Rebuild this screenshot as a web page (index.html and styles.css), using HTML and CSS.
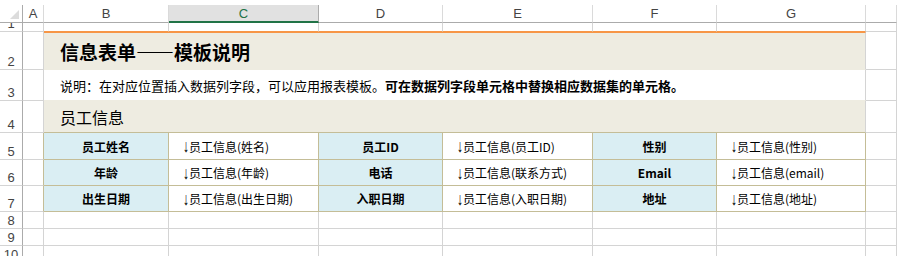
FILE: index.html
```html
<!DOCTYPE html>
<html lang="zh-CN">
<head>
<meta charset="utf-8">
<title>信息表单——模板说明</title>
<link rel="stylesheet" href="styles.css">
</head>
<body>
<div class="sheet">
  <div class="grid">
    <div class="corner"><svg width="23" height="18" viewBox="0 0 23 18"><polygon points="19,5 19,14 10,14" fill="#dcdcdc"/></svg></div>
    <div class="ch">A</div>
    <div class="ch">B</div>
    <div class="ch sel">C</div>
    <div class="ch">D</div>
    <div class="ch">E</div>
    <div class="ch">F</div>
    <div class="ch">G</div>
    <div class="ch"></div>

    <div class="rh">1</div>
    <div class="c"></div>
    <div class="c accent"></div><div class="c accent"></div><div class="c accent"></div><div class="c accent"></div><div class="c accent"></div><div class="c accent"></div>
    <div class="c"></div>

    <div class="rh">2</div>
    <div class="c"></div>
    <div class="c title">信息表单——模板说明</div>
    <div class="c"></div>

    <div class="rh">3</div>
    <div class="c"></div>
    <div class="c desc">说明：在对应位置插入数据列字段，可以应用报表模板。<b>可在数据列字段单元格中替换相应数据集的单元格。</b></div>
    <div class="c"></div>

    <div class="rh">4</div>
    <div class="c"></div>
    <div class="c section">员工信息</div>
    <div class="c"></div>

    <div class="rh">5</div>
    <div class="c edge"></div>
    <div class="c lbl">员工姓名</div>
    <div class="c val"><span class="arrow">↓</span>员工信息(姓名)</div>
    <div class="c lbl">员工ID</div>
    <div class="c val"><span class="arrow">↓</span>员工信息(员工ID)</div>
    <div class="c lbl">性别</div>
    <div class="c val"><span class="arrow">↓</span>员工信息(性别)</div>
    <div class="c"></div>

    <div class="rh">6</div>
    <div class="c edge"></div>
    <div class="c lbl">年龄</div>
    <div class="c val"><span class="arrow">↓</span>员工信息(年龄)</div>
    <div class="c lbl">电话</div>
    <div class="c val"><span class="arrow">↓</span>员工信息(联系方式)</div>
    <div class="c lbl">Email</div>
    <div class="c val"><span class="arrow">↓</span>员工信息(email)</div>
    <div class="c"></div>

    <div class="rh">7</div>
    <div class="c edge"></div>
    <div class="c lbl">出生日期</div>
    <div class="c val"><span class="arrow">↓</span>员工信息(出生日期)</div>
    <div class="c lbl">入职日期</div>
    <div class="c val"><span class="arrow">↓</span>员工信息(入职日期)</div>
    <div class="c lbl">地址</div>
    <div class="c val"><span class="arrow">↓</span>员工信息(地址)</div>
    <div class="c"></div>

    <div class="rh">8</div>
    <div class="c"></div><div class="c"></div><div class="c"></div><div class="c"></div><div class="c"></div><div class="c"></div><div class="c"></div><div class="c"></div>

    <div class="rh">9</div>
    <div class="c"></div><div class="c"></div><div class="c"></div><div class="c"></div><div class="c"></div><div class="c"></div><div class="c"></div><div class="c"></div>

    <div class="rh">10</div>
    <div class="c"></div><div class="c"></div><div class="c"></div><div class="c"></div><div class="c"></div><div class="c"></div><div class="c"></div><div class="c"></div>
  </div>
</div>
</body>
</html>
```

FILE: styles.css
```css
html, body {
  margin: 0;
  padding: 0;
  background: #ffffff;
  overflow: hidden;
}

.sheet {
  padding-top: 5px;
  width: 897px;
  height: 251px;
  overflow: hidden;
}

.grid {
  display: grid;
  grid-template-columns: 23px 21px 125px 150px 124px 150px 124px 149px 1fr;
  grid-template-rows: 18px 9px 38px 31px 32px 27px 26px 26px 17px 17px 17px;
  font-family: "Noto Sans CJK SC", sans-serif;
  color: #000;
}

.grid > div {
  box-sizing: border-box;
  overflow: hidden;
  white-space: nowrap;
}

.corner {
  border-right: 1px solid #ababab;
  border-bottom: 1px solid #ababab;
}
.corner svg { display: block; }

.ch {
  display: flex;
  align-items: center;
  justify-content: center;
  font-family: "Liberation Sans", Arial, sans-serif;
  font-size: 13px;
  color: #444;
  border-right: 1px solid #dadada;
  border-bottom: 1px solid #ababab;
}
.ch.sel {
  background: #e1e1e1;
  color: #217346;
  border-right-color: #ababab;
  border-bottom: 2px solid #217346;
}

.rh {
  display: flex;
  align-items: flex-end;
  justify-content: center;
  padding-bottom: 1px;
  font-family: "Liberation Sans", Arial, sans-serif;
  font-size: 13px;
  line-height: 13px;
  color: #444;
  border-right: 1px solid #ababab;
  border-bottom: 1px solid #d4d4d4;
}

.c {
  border-right: 1px solid #d4d4d4;
  border-bottom: 1px solid #d4d4d4;
}

.c.accent {
  border-bottom-color: #f79646;
}

.title, .desc, .section {
  grid-column: span 6;
  display: flex;
  align-items: center;
  padding-left: 16px;
}

.title {
  background: #eeece1;
  border-top: 1px solid #f79646;
  border-bottom-color: #eeece1;
  font-size: 19px;
  font-weight: 700;
}

.desc {
  font-size: 13px;
  border-bottom-color: #eeece1;
}
.desc b { font-weight: 700; }

.section {
  background: #eeece1;
  font-size: 16px;
  border-bottom-color: #c4bd97;
}

.c.edge {
  border-right-color: #c4bd97;
}

.lbl, .val {
  display: flex;
  align-items: center;
  font-size: 12px;
  border-right-color: #c4bd97;
  border-bottom-color: #c4bd97;
}

.lbl {
  justify-content: center;
  background: #daeef3;
  font-weight: 700;
}

.val {
  padding-left: 14px;
}

.arrow {
  display: inline-block;
  font-family: "Liberation Sans", Arial, sans-serif;
  font-size: 12px;
  transform: scaleY(1.5);
}
```
